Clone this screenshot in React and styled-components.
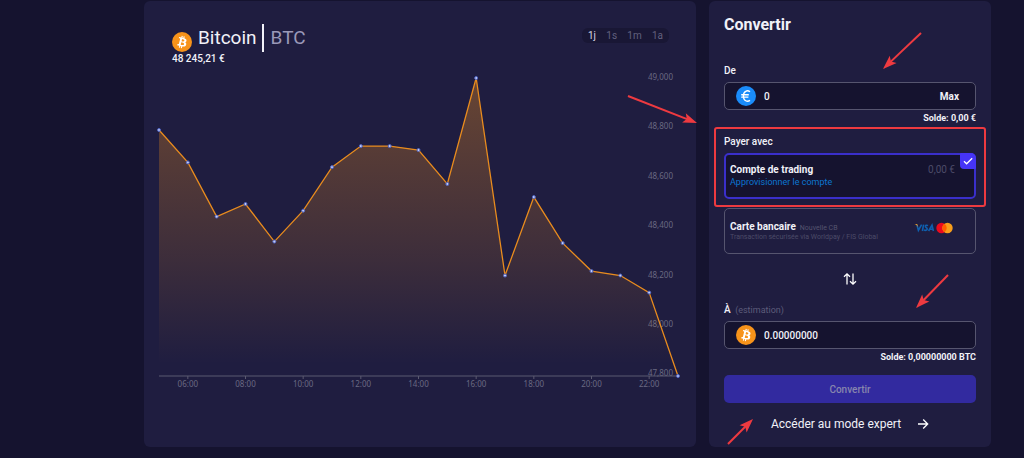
import React, { useState } from "react";
import styled, { createGlobalStyle } from "styled-components";

const GlobalStyle = createGlobalStyle`
  *, *::before, *::after { box-sizing: border-box; }
  body {
    margin: 0;
    background: #15132f;
    color: #f1f1f8;
    font-family: Roboto, "Liberation Sans", sans-serif;
    font-size: 10px;
  }
  button, input { font: inherit; color: inherit; }
`;

const Page = styled.main`
  display: grid;
  grid-template-columns: minmax(0, 1fr) 282px;
  gap: 13px;
  padding: 1px 33px 11px 144px;
`;

const Card = styled.section`
  position: relative;
  background: #1f1d40;
  border-radius: 6px;
`;

const ConvertCard = styled(Card)`
  padding: 14px 15px;
`;

const ChartHeader = styled.header`
  display: flex;
  justify-content: space-between;
  align-items: flex-start;
  padding: 23px 27px 1px 28px;
`;

const AssetTitle = styled.h1`
  display: flex;
  align-items: flex-end;
  margin: 0;
  font-size: 19px;
  line-height: 28px;
  font-weight: 400;
`;

const AssetName = styled.span`
  padding: 0 5px 0 6px;
`;

const AssetTicker = styled.span`
  border-left: 2px solid #f1f1f8;
  padding-left: 7px;
  color: #9a99b8;
`;

const Price = styled.div`
  font-size: 10px;
  line-height: 14px;
  font-weight: 500;
`;

const Periods = styled.div`
  display: flex;
  justify-content: space-between;
  width: 87px;
  padding: 0 6px;
  margin-top: 4px;
  border-radius: 6px;
  background: #191735;
`;

const Period = styled.button`
  border: 0;
  padding: 0;
  background: none;
  line-height: 15px;
  font-size: 10px;
  color: ${(p) => (p.$active ? "#d5d5e4" : "#62617f")};
`;

const ChartSvg = styled.svg`
  display: block;
  width: 100%;
  height: auto;
`;

const AxisText = styled.text`
  font-family: "Noto Sans", "Open Sans", sans-serif;
  font-size: 8px;
  fill: #6a6982;
`;

const Heading = styled.h2`
  margin: 0 0 28px;
  font-size: 16px;
  line-height: 20px;
  font-weight: 700;
`;

const FieldLabel = styled.label`
  display: block;
  margin-bottom: 3px;
  font-size: 10px;
  line-height: 16px;
  font-weight: 500;
`;

const Hint = styled.span`
  margin-left: 2px;
  font-size: 9px;
  font-weight: 400;
  color: #5d5c7a;
`;

const Field = styled.div`
  display: flex;
  align-items: center;
  height: 28px;
  padding: 0 16px 0 11px;
  border: 1px solid #56556f;
  border-radius: 5px;
  background: #15132f;
`;

const AmountInput = styled.input`
  flex: 1;
  min-width: 0;
  margin-left: 8px;
  padding: 0;
  border: 0;
  outline: 0;
  background: none;
  font-size: 10px;
  font-weight: 500;
`;

const MaxButton = styled.button`
  border: 0;
  padding: 0;
  background: none;
  font-size: 10px;
  font-weight: 700;
`;

const Balance = styled.div`
  text-align: right;
  font-size: 9px;
  line-height: 16px;
  font-weight: 700;
`;

const PaySection = styled.fieldset`
  position: relative;
  min-width: 0;
  margin: 8px 0 9px;
  padding: 0;
  border: 0;
`;

const PayLegend = styled.legend`
  padding: 0 0 3px;
  font-size: 10px;
  line-height: 16px;
  font-weight: 500;
`;

const Option = styled.div`
  position: relative;
  display: flex;
  justify-content: space-between;
  height: 46px;
  padding: ${(p) => (p.$active ? "9px 19px 0 4px" : "12px 21px 0 5px")};
  border: ${(p) => (p.$active ? "2px solid #3a2fcb" : "1px solid #56556f")};
  border-radius: 5px;
  background: ${(p) => (p.$active ? "#15132f" : "transparent")};
`;

const OptionTitle = styled.label`
  font-size: 10px;
  line-height: 12px;
  font-weight: 700;
`;

const OptionRow = styled.div`
  display: flex;
  align-items: baseline;
  line-height: 12px;
`;

const OptionNote = styled.span`
  margin-left: 4px;
  font-size: 7px;
  color: #55546f;
`;

const OptionDetail = styled.div`
  font-size: 7px;
  line-height: 6px;
  color: #4c4b68;
`;

const FundLink = styled.a`
  display: block;
  font-size: 9px;
  line-height: 12px;
  color: #0b76d1;
  text-decoration: none;
`;

const OptionAmount = styled.span`
  font-size: 10px;
  line-height: 12px;
  color: #4c4b68;
`;

const HiddenRadio = styled.input`
  position: absolute;
  inset: 0;
  margin: 0;
  opacity: 0;
  pointer-events: none;
`;

const Badge = styled.span`
  position: absolute;
  top: -2px;
  right: -2px;
  display: grid;
  place-items: center;
  width: 16px;
  height: 16px;
  border-radius: 1px 5px 1px 4px;
  background: #4634f6;
`;

const Highlight = styled.div`
  position: absolute;
  inset: -26px -10px -8px;
  border: 2px solid #ee3a40;
  border-radius: 3px;
  pointer-events: none;
`;

const CardLogos = styled.svg`
  display: block;
  margin-top: 1px;
`;

const SwapButton = styled.button`
  display: block;
  margin: 16px auto 14px;
  padding: 0;
  border: 0;
  background: none;
  height: 18px;
`;

const Submit = styled.button`
  display: block;
  width: 100%;
  height: 28px;
  margin-top: 10px;
  border: 0;
  border-radius: 5px;
  background: #322a9f;
  color: #8886ae;
  font-size: 10px;
  font-weight: 500;
`;

const ExpertLink = styled.a`
  display: flex;
  justify-content: center;
  align-items: center;
  gap: 16px;
  margin-top: 12px;
  font-size: 12px;
  line-height: 18px;
  font-weight: 400;
  color: inherit;
  text-decoration: none;
`;

const Annotations = styled.svg`
  position: absolute;
  top: 0;
  left: 0;
  width: 100%;
  height: 100%;
  overflow: visible;
  pointer-events: none;
`;

function BitcoinIcon() {
  return (
    <svg width="20" height="20" viewBox="0 0 32 32" aria-hidden="true">
      <circle cx="16" cy="16" r="16" fill="#f7931a" />
      <path
        fill="#fff"
        d="M23.19 14.02c.31-2.1-1.29-3.23-3.47-3.98l.71-2.84-1.73-.43-.69 2.76-1.38-.32.69-2.78-1.72-.43-.71 2.84-1.1-.26-2.39-.6-.46 1.85s1.28.3 1.26.31c.7.18.83.64.8 1.01l-1.94 7.78c-.09.21-.3.53-.8.41.02.03-1.26-.31-1.26-.31l-.86 1.98 3.48.88-.72 2.87 1.73.43.71-2.84 1.38.36-.71 2.83 1.73.43.72-2.86c2.95.56 5.16.33 6.09-2.34.75-2.14-.04-3.38-1.58-4.18 1.13-.26 1.98-1 2.22-2.57zm-3.95 5.54c-.53 2.15-4.15.99-5.32.7l.95-3.81c1.17.29 4.93.87 4.37 3.11zm.53-5.57c-.48 1.95-3.5.96-4.47.72l.86-3.46c.98.25 4.12.7 3.61 2.74z"
      />
    </svg>
  );
}

function EuroIcon() {
  return (
    <svg width="20" height="20" viewBox="0 0 20 20" aria-hidden="true">
      <circle cx="10" cy="10" r="10" fill="#1a8cfa" />
      <path
        d="M14 5.8C11.4 3.8 7.4 5 7.4 10C7.4 15 11.4 16.2 14 14.4M5.2 8.8H12.8M5.2 11.1H12.4"
        fill="none"
        stroke="#fff"
        strokeWidth="1.4"
      />
    </svg>
  );
}

const PRICES = [
  48794, 48663, 48444, 48495, 48343, 48468, 48644, 48729, 48729, 48713,
  48576, 49004, 48206, 48523, 48337, 48224, 48206, 48137, 47800,
];
const AXIS_Y = 309;
const px = (i) => 15 + (i * 519) / 18;
const py = (v) => AXIS_Y - (v - 47800) * 0.2475;

function PriceChart() {
  const points = PRICES.map((v, i) => `${px(i)},${py(v)}`).join(" ");
  return (
    <ChartSvg viewBox="0 0 552 324" role="img" aria-label="Cours du Bitcoin">
      <defs>
        <linearGradient id="area" x1="0" y1="0" x2="0" y2="1">
          <stop offset="0" stopColor="#f7931a" stopOpacity="0.34" />
          <stop offset="0.6" stopColor="#f7931a" stopOpacity="0.14" />
          <stop offset="0.96" stopColor="#f7931a" stopOpacity="0" />
        </linearGradient>
      </defs>
      {[49000, 48800, 48600, 48400, 48200, 48000, 47800].map((v, i) => (
        <AxisText key={v} x="529" y={13 + i * 49.4} textAnchor="end">
          {v.toLocaleString("en-US")}
        </AxisText>
      ))}
      <polygon
        points={`${px(0)},${AXIS_Y} ${points} ${px(18)},${AXIS_Y}`}
        fill="url(#area)"
      />
      <path d={`M15 ${AXIS_Y}H534`} stroke="#5b5a70" strokeWidth="1" />
      {[6, 8, 10, 12, 14, 16, 18, 20, 22].map((h) => (
        <g key={h}>
          <path d={`M${px(h - 5)} ${AXIS_Y}v3`} stroke="#5b5a70" />
          <AxisText x={px(h - 5)} y={AXIS_Y + 11} textAnchor="middle">
            {String(h).padStart(2, "0")}:00
          </AxisText>
        </g>
      ))}
      <polyline points={points} fill="none" stroke="#e98c1e" strokeWidth="1.3" />
      {PRICES.map((v, i) => (
        <circle
          key={i}
          cx={px(i)}
          cy={py(v)}
          r="1.5"
          fill="#c3cef5"
          stroke="#4d62c4"
          strokeWidth="1"
        />
      ))}
    </ChartSvg>
  );
}

function Arrow({ from, to }) {
  const length = Math.hypot(to[0] - from[0], to[1] - from[1]);
  const angle = (Math.atan2(to[1] - from[1], to[0] - from[0]) * 180) / Math.PI;
  return (
    <g transform={`translate(${to[0]} ${to[1]}) rotate(${angle})`}>
      <path d={`M${-length} 0H-10`} stroke="#ee3a40" strokeWidth="2" />
      <path d="M0 0L-14 -5L-11 0L-14 5Z" fill="#ee3a40" />
    </g>
  );
}

export default function App() {
  const [period, setPeriod] = useState("1j");
  const [amount, setAmount] = useState("0");
  const [method, setMethod] = useState("trading");
  return (
    <>
      <GlobalStyle />
      <Page>
        <Card>
          <ChartHeader>
            <div>
              <AssetTitle>
                <BitcoinIcon />
                <AssetName>Bitcoin</AssetName>
                <AssetTicker>BTC</AssetTicker>
              </AssetTitle>
              <Price>48 245,21 €</Price>
            </div>
            <Periods>
              {["1j", "1s", "1m", "1a"].map((p) => (
                <Period key={p} $active={p === period} onClick={() => setPeriod(p)}>
                  {p}
                </Period>
              ))}
            </Periods>
          </ChartHeader>
          <PriceChart />
        </Card>

        <ConvertCard>
          <Heading>Convertir</Heading>
          <FieldLabel htmlFor="from">De</FieldLabel>
          <Field>
            <EuroIcon />
            <AmountInput id="from" value={amount} onChange={(e) => setAmount(e.target.value)} />
            <MaxButton type="button">Max</MaxButton>
          </Field>
          <Balance>Solde: 0,00 €</Balance>

          <PaySection>
            <PayLegend>Payer avec</PayLegend>
            <Option $active>
              <HiddenRadio
                type="radio"
                name="method"
                id="trading"
                checked={method === "trading"}
                onChange={() => setMethod("trading")}
              />
              <div>
                <OptionRow>
                  <OptionTitle htmlFor="trading">Compte de trading</OptionTitle>
                </OptionRow>
                <FundLink href="#fund">Approvisionner le compte</FundLink>
              </div>
              <OptionAmount>0,00 €</OptionAmount>
              <Badge>
                <svg width="12" height="10" viewBox="0 0 12 10" aria-hidden="true">
                  <path d="M2 5.2L4.6 7.8L10.2 2.2" fill="none" stroke="#fff" strokeWidth="1.3" />
                </svg>
              </Badge>
            </Option>
            <Highlight />
          </PaySection>
          <Option>
            <HiddenRadio
              type="radio"
              name="method"
              id="card"
              checked={method === "card"}
              onChange={() => setMethod("card")}
            />
            <div>
              <OptionRow>
                <OptionTitle htmlFor="card">Carte bancaire</OptionTitle>
                <OptionNote>Nouvelle CB</OptionNote>
              </OptionRow>
              <OptionDetail>Transaction sécurisée via Worldpay / FIS Global</OptionDetail>
            </div>
            <CardLogos width="40" height="12" viewBox="0 0 40 12" role="img" aria-label="Visa, Mastercard">
              <g fill="none" stroke="#0f5fae" strokeWidth="1.6">
                <path d="M3 3L4.4 8.4L7.6 2.6" />
                <path d="M9.6 2.6L8.4 9" />
                <path d="M14 3.6C12.6 2.8 11.2 3.4 11.4 4.5C11.6 5.6 13.4 5.8 13.2 7.1C13 8.5 11.2 8.6 9.9 7.9" />
                <path d="M14.6 9L18 3.2L19.4 9M15.8 7.2H19" />
              </g>
              <path d="M0.5 2H3.2L4.2 5.4C3.4 3.8 2.2 2.7 0.5 2Z" fill="#e79a2b" />
              <circle cx="27.5" cy="6" r="5.2" fill="#eb0a1e" />
              <circle cx="33.5" cy="6" r="5.2" fill="#f79e1b" />
              <path d="M30.5 1.75A5.2 5.2 0 0 1 30.5 10.25A5.2 5.2 0 0 1 30.5 1.75Z" fill="#ff5f00" />
            </CardLogos>
          </Option>

          <SwapButton type="button" aria-label="Inverser">
            <svg width="14" height="18" viewBox="0 0 14 18" aria-hidden="true">
              <path
                d="M4 14.5V4M1 6.8L4 3.8L7 6.8M10 3.5V14M7 11.2L10 14.2L13 11.2"
                fill="none"
                stroke="#fff"
                strokeWidth="1.3"
              />
            </svg>
          </SwapButton>

          <FieldLabel htmlFor="to">
            À <Hint>(estimation)</Hint>
          </FieldLabel>
          <Field>
            <BitcoinIcon />
            <AmountInput id="to" value="0.00000000" readOnly />
          </Field>
          <Balance>Solde: 0,00000000 BTC</Balance>
          <Submit type="button" disabled>
            Convertir
          </Submit>
          <ExpertLink href="#expert">
            Accéder au mode expert
            <svg width="12" height="12" viewBox="0 0 12 12" aria-hidden="true">
              <path d="M1 6H10.5M6.2 1.5L10.7 6L6.2 10.5" fill="none" stroke="#fff" strokeWidth="1.3" />
            </svg>
          </ExpertLink>
          <Annotations aria-hidden="true">
            <Arrow from={[212, 32]} to={[174, 68]} />
            <Arrow from={[-81, 95]} to={[-12, 122]} />
            <Arrow from={[239, 274]} to={[207, 307]} />
            <Arrow from={[19, 443]} to={[44, 418]} />
          </Annotations>
        </ConvertCard>
      </Page>
    </>
  );
}
